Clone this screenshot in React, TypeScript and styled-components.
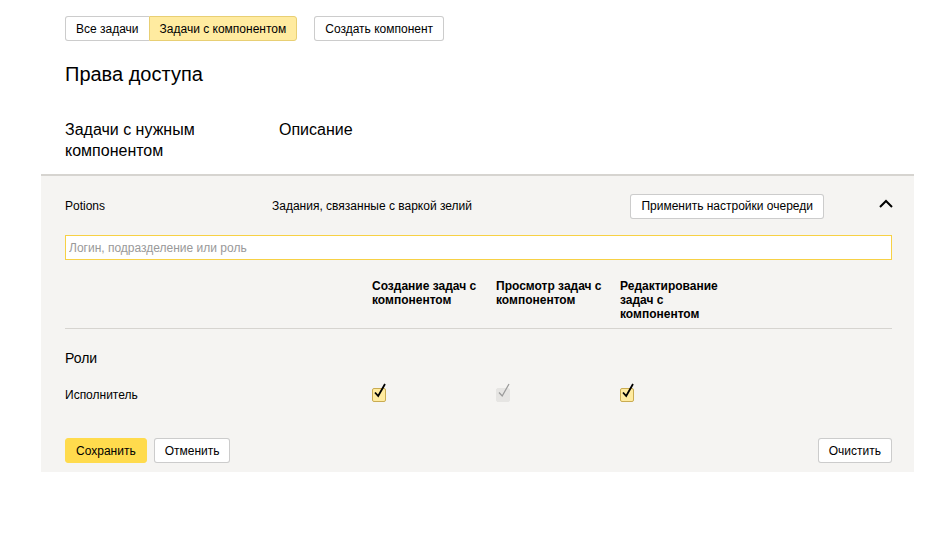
import React from 'react'
import styled, { createGlobalStyle } from 'styled-components'

type Perm = { checked: boolean; disabled?: boolean }

const columns = [
  'Создание задач с компонентом',
  'Просмотр задач с компонентом',
  'Редактирование задач с компонентом',
]

const roles: { name: string; perms: Perm[] }[] = [
  {
    name: 'Исполнитель',
    perms: [{ checked: true }, { checked: true, disabled: true }, { checked: true }],
  },
]

const GlobalStyle = createGlobalStyle`
  body {
    margin: 0;
    background: #fff;
    font-family: "Liberation Sans", Arial, sans-serif;
    color: #000;
  }
`

const CheckMark: React.FC<{ disabled?: boolean }> = ({ disabled }) => (
  <svg width="16" height="18" viewBox="0 0 16 18">
    <path
      d="M3 10.5 L6.2 14 L13 2"
      fill="none"
      stroke={disabled ? '#9b9b9b' : '#000'}
      strokeWidth={disabled ? 1.3 : 1.8}
    />
  </svg>
)

const Checkbox: React.FC<Perm> = ({ checked, disabled }) => (
  <CheckBox $disabled={disabled}>
    {checked && (
      <MarkWrap>
        <CheckMark disabled={disabled} />
      </MarkWrap>
    )}
  </CheckBox>
)

export default function App() {
  return (
    <>
      <GlobalStyle />
      <Page>
        <Top>
          <Toolbar>
            <TabGroup>
              <Tab>Все задачи</Tab>
              <Tab $active>Задачи с компонентом</Tab>
            </TabGroup>
            <Button>Создать компонент</Button>
          </Toolbar>
          <Title>Права доступа</Title>
          <SectionHead>
            <HeadName>Задачи с нужным компонентом</HeadName>
            <HeadDesc>Описание</HeadDesc>
          </SectionHead>
        </Top>
        <Panel>
          <QueueRow>
            <QueueName>Potions</QueueName>
            <QueueDesc>Задания, связанные с варкой зелий</QueueDesc>
            <Button>Применить настройки очереди</Button>
            <Chevron>
              <svg width="14" height="9" viewBox="0 0 14 9">
                <path d="M1 8 L7 2 L13 8" fill="none" stroke="#000" strokeWidth="2" />
              </svg>
            </Chevron>
          </QueueRow>
          <SearchBox>
            <Search placeholder="Логин, подразделение или роль" />
          </SearchBox>
          <Grid>
            <span />
            {columns.map((c) => (
              <ColHead key={c}>{c}</ColHead>
            ))}
            <Filler />
          </Grid>
          <Divider />
          <RolesTitle>Роли</RolesTitle>
          {roles.map((r) => (
            <RoleGrid key={r.name}>
              <RoleName>{r.name}</RoleName>
              {r.perms.map((p, i) => (
                <Cell key={i}>
                  <Checkbox {...p} />
                </Cell>
              ))}
              <Filler />
            </RoleGrid>
          ))}
          <Footer>
            <Actions>
              <Button $primary>Сохранить</Button>
              <Button>Отменить</Button>
            </Actions>
            <Button>Очистить</Button>
          </Footer>
        </Panel>
      </Page>
    </>
  )
}

const Page = styled.div`
  width: 873px;
  margin-left: 41px;
  padding-top: 16px;
`

const Top = styled.div`
  padding: 0 24px;
`

const Toolbar = styled.div`
  display: flex;
  align-items: center;
  gap: 17px;
`

const TabGroup = styled.div`
  display: flex;
`

const Button = styled.button<{ $primary?: boolean }>`
  height: 25px;
  padding: 0 10px;
  font-family: "Liberation Sans", Arial, sans-serif;
  font-size: 12px;
  color: #000;
  background: ${(p) => (p.$primary ? '#ffdb4d' : '#fff')};
  border: 1px solid ${(p) => (p.$primary ? '#ffdb4d' : 'rgba(0, 0, 0, 0.2)')};
  border-radius: 3px;
  white-space: nowrap;
  cursor: pointer;
`

const Tab = styled(Button)<{ $active?: boolean }>`
  background: ${(p) => (p.$active ? '#ffeba0' : '#fff')};
  border-color: ${(p) => (p.$active ? '#e8cf74' : 'rgba(0, 0, 0, 0.2)')};
  &:first-child {
    border-radius: 3px 0 0 3px;
    border-right: none;
  }
  &:last-child {
    border-radius: 0 3px 3px 0;
  }
`

const Title = styled.h1`
  margin: 21px 0 0;
  font-size: 20px;
  font-weight: normal;
  line-height: 24px;
`

const SectionHead = styled.div`
  display: flex;
  margin-top: 33px;
  padding-bottom: 13px;
  font-size: 16px;
  line-height: 21px;
`

const HeadName = styled.div`
  width: 214px;
`

const HeadDesc = styled.div``

const Panel = styled.div`
  background: #f5f4f2;
  border-top: 2px solid #d6d4d0;
  padding: 17px 21px 9px 24px;
`

const QueueRow = styled.div`
  display: flex;
  align-items: center;
  height: 26px;
  font-size: 12px;
`

const QueueName = styled.div`
  width: 207px;
`

const QueueDesc = styled.div`
  flex: 1;
`

const Chevron = styled.div`
  display: flex;
  width: 69px;
  justify-content: flex-end;
  padding-bottom: 6px;
`

const SearchBox = styled.div`
  box-sizing: border-box;
  width: 827px;
  height: 25px;
  margin-top: 16px;
  border: 1px solid #f7d145;
  background: #fff;
`

const Search = styled.input`
  display: block;
  box-sizing: border-box;
  width: 100%;
  height: 100%;
  padding: 0 3px;
  border: none;
  background: transparent;
  outline: none;
  font-family: "Liberation Sans", Arial, sans-serif;
  font-size: 12px;
  &::placeholder {
    color: #999;
  }
`

const Grid = styled.div`
  display: grid;
  grid-template-columns: 307px 124px 124px 124px 1fr;
  width: 827px;
  padding: 19px 0 7px;
`

const ColHead = styled.div`
  font-size: 12px;
  font-weight: bold;
  line-height: 14px;
  padding-right: 12px;
`

const Filler = styled.span``

const Divider = styled.div`
  width: 827px;
  height: 1px;
  background: #d6d4d0;
`

const RolesTitle = styled.div`
  margin-top: 21px;
  font-size: 14px;
  line-height: 17px;
`

const RoleGrid = styled.div`
  display: grid;
  grid-template-columns: 307px 124px 124px 124px 1fr;
  align-items: center;
  width: 827px;
  margin-top: 19px;
  height: 18px;
`

const RoleName = styled.div`
  font-size: 12px;
`

const Cell = styled.div`
  display: flex;
`

const CheckBox = styled.span<{ $disabled?: boolean }>`
  position: relative;
  box-sizing: border-box;
  width: 14px;
  height: 14px;
  border-radius: 2px;
  background: ${(p) => (p.$disabled ? '#e6e5e3' : '#ffeba0')};
  border: 1px solid ${(p) => (p.$disabled ? '#e6e5e3' : '#c9ab52')};
`

const MarkWrap = styled.span`
  position: absolute;
  left: -1px;
  top: -7px;
`

const Footer = styled.div`
  display: flex;
  justify-content: space-between;
  width: 827px;
  margin-top: 34px;
`

const Actions = styled.div`
  display: flex;
  gap: 7px;
`
